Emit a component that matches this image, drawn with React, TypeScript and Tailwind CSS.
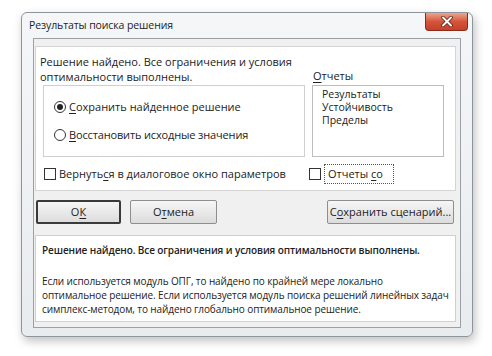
import React from 'react';

const Radio = ({ checked }: { checked?: boolean }) => (
  <span className="w-[12px] h-[12px] rounded-full border border-[#333] bg-white flex items-center justify-center shrink-0">
    {checked && <span className="w-[6px] h-[6px] rounded-full bg-[#222]" />}
  </span>
);

const Box = () => <span className="w-[12px] h-[12px] border border-[#333] bg-white shrink-0" />;

const U = ({ children }: { children: React.ReactNode }) => <span className="underline underline-offset-2">{children}</span>;

const Button = ({ children, wide, isDefault }: { children: React.ReactNode; wide?: string; isDefault?: boolean }) => (
  <button
    className={
      'h-[24px] flex items-center justify-center rounded-[2px] bg-gradient-to-b from-[#f6f6f6] to-[#dcdcdc] text-[#222] ' +
      (isDefault ? 'border-2 border-[#3a3a3a] ' : 'border border-[#8e8e8e] ') +
      (wide || '')
    }
  >
    <span>{children}</span>
  </button>
);

export default function App() {
  return (
    <div className="w-[492px] h-[356px] bg-white overflow-hidden pt-[12px] pl-[21px] font-['Open_Sans',sans-serif] text-[11px] text-[#222]">
      <div className="w-[452px] h-[325px] rounded-[6px] border border-[#8f959c] bg-gradient-to-b from-[#f4f6f8] to-[#e9ecef] shadow-[2px_4px_10px_rgba(0,0,0,0.25)] flex flex-col">
        <div className="h-[24px] flex justify-between shrink-0">
          <span className="pl-[7px] pt-[5px] text-[10.5px] tracking-[-0.1px] text-[#1e1e1e]">Результаты поиска решения</span>
          <div className="mr-[4px] w-[43px] h-[18px] rounded-b-[4px] border border-t-0 border-[#8c2a1c] bg-gradient-to-b from-[#eba58f] via-[#d5553c] to-[#c4402a] flex items-center justify-center">
            <svg width="12" height="11" viewBox="0 0 12 11">
              <path d="M2 1.5 L10 9.5 M10 1.5 L2 9.5" stroke="#5a1a10" strokeWidth="3.5" strokeLinecap="round" />
              <path d="M2 1.5 L10 9.5 M10 1.5 L2 9.5" stroke="#fff" strokeWidth="2" strokeLinecap="round" />
            </svg>
          </div>
        </div>
        <div className="mt-[1px] mx-[11px] mb-[8px] flex-1 border border-[#9aa0a6] bg-[#f0f0f0] px-[1px] pt-[7px] flex flex-col">
          <div className="h-[145px] mr-[3px] border border-[#d4d4d4] bg-white pl-[4px] pr-[10px] pt-[7px] flex flex-col">
            <div className="flex">
              <div className="w-[266px] leading-[15px]">
                <div>Решение найдено. Все ограничения и условия</div>
                <div>оптимальности выполнены.</div>
              </div>
              <div className="ml-[7px] pt-[15px] leading-[14px]"><U>О</U>тчеты</div>
            </div>
            <div className="flex mt-[1px] pl-[3px]">
              <div className="w-[262px] h-[72px] border border-[#cfcfcf] pl-[10px] pt-[14px] flex flex-col gap-[14px] leading-[14px]">
                <div className="flex items-center gap-[3px]"><Radio checked /><span><U>С</U>охранить найденное решение</span></div>
                <div className="flex items-center gap-[3px]"><Radio /><span className="tracking-[-0.15px]"><U>В</U>осстановить исходные значения</span></div>
              </div>
              <div className="ml-[7px] w-[132px] h-[72px] border border-[#bdbdbd] pl-[9px] pt-[2px] text-[10.5px] leading-[13px]">
                <div>Результаты</div>
                <div>Устойчивость</div>
                <div>Пределы</div>
              </div>
            </div>
            <div className="flex items-center mt-[7px] pl-[4px]">
              <div className="w-[265px] flex items-center gap-[3px]"><Box /><span>Вернуть<U>с</U>я в диалоговое окно параметров</span></div>
              <div className="flex items-center gap-[3px]">
                <Box />
                <div className="border border-dotted border-[#555] w-[70px] h-[20px] pl-[3px] flex items-center">
                  <span>Отчеты <U>с</U>о</span>
                </div>
              </div>
            </div>
          </div>
          <div className="flex items-center mt-[9px] pl-[1px] pr-[5px]">
            <Button wide="w-[85px]" isDefault>О<U>К</U></Button>
            <Button wide="w-[87px] ml-[9px]">О<U>т</U>мена</Button>
            <div className="flex-1" />
            <Button wide="w-[127px]">С<U>о</U>хранить сценарий...</Button>
          </div>
          <div className="mt-[11px] mr-[3px] h-[87px] border border-[#cfcfcf] bg-white px-[6px] pt-[7px] text-[10px] leading-[14px] whitespace-nowrap">
            <div className="font-semibold tracking-[-0.1px]">Решение найдено. Все ограничения и условия оптимальности выполнены.</div>
            <div className="mt-[17px] tracking-[-0.1px]">
              <div>Если используется модуль ОПГ, то найдено по крайней мере локально</div>
              <div>оптимальное решение. Если используется модуль поиска решений линейных задач</div>
              <div>симплекс-методом, то найдено глобально оптимальное решение.</div>
            </div>
          </div>
        </div>
      </div>
    </div>
  );
}
